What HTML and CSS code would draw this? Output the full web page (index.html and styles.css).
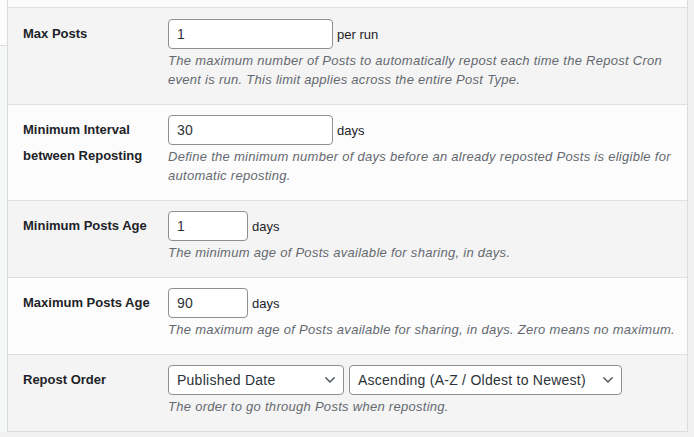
FILE: index.html
```html
<!DOCTYPE html>
<html lang="en">
<head>
<meta charset="utf-8">
<title>Repost Settings</title>
<link rel="stylesheet" href="styles.css">
</head>
<body>
<div class="page">
  <nav class="tabs">
    <div class="tab tab--active"></div>
    <div class="tab"></div>
  </nav>
  <div class="panel">
    <div class="strip"></div>

    <div class="row row--alt row--first">
      <div class="label">Max Posts</div>
      <div class="field">
        <div class="control">
          <input class="input input--wide" type="text" value="1">
          <span class="unit">per run</span>
        </div>
        <p class="desc">The maximum number of Posts to automatically repost each time the Repost Cron event is run. This limit applies across the entire Post Type.</p>
      </div>
    </div>

    <div class="row">
      <div class="label">Minimum Interval between Reposting</div>
      <div class="field">
        <div class="control">
          <input class="input input--wide" type="text" value="30">
          <span class="unit">days</span>
        </div>
        <p class="desc">Define the minimum number of days before an already reposted Posts is eligible for automatic reposting.</p>
      </div>
    </div>

    <div class="row row--alt">
      <div class="label">Minimum Posts Age</div>
      <div class="field">
        <div class="control">
          <input class="input input--small" type="text" value="1">
          <span class="unit">days</span>
        </div>
        <p class="desc">The minimum age of Posts available for sharing, in days.</p>
      </div>
    </div>

    <div class="row">
      <div class="label">Maximum Posts Age</div>
      <div class="field">
        <div class="control">
          <input class="input input--small" type="text" value="90">
          <span class="unit">days</span>
        </div>
        <p class="desc">The maximum age of Posts available for sharing, in days. Zero means no maximum.</p>
      </div>
    </div>

    <div class="row row--alt row--last">
      <div class="label">Repost Order</div>
      <div class="field">
        <div class="control control--selects">
          <span class="select-wrap select-wrap--first">
            <select class="select">
              <option>Published Date</option>
            </select>
            <svg class="chevron" width="10" height="6" viewBox="0 0 10 6" aria-hidden="true"><polyline points="0.8,0.8 5,5 9.2,0.8" fill="none" stroke="#50575e" stroke-width="1.5" stroke-linecap="round" stroke-linejoin="round"/></svg>
          </span>
          <span class="select-wrap select-wrap--second">
            <select class="select">
              <option>Ascending (A-Z / Oldest to Newest)</option>
            </select>
            <svg class="chevron" width="10" height="6" viewBox="0 0 10 6" aria-hidden="true"><polyline points="0.8,0.8 5,5 9.2,0.8" fill="none" stroke="#50575e" stroke-width="1.5" stroke-linecap="round" stroke-linejoin="round"/></svg>
          </span>
        </div>
        <p class="desc">The order to go through Posts when reposting.</p>
      </div>
    </div>
  </div>
</div>
</body>
</html>
```

FILE: styles.css
```css
* {
  box-sizing: border-box;
}

html, body {
  margin: 0;
  padding: 0;
}

body {
  background: #f0f0f1;
  font-family: "Liberation Sans", Arial, sans-serif;
  font-size: 13px;
  color: #1d2327;
  width: 694px;
  height: 437px;
  overflow: hidden;
}

.page {
  display: flex;
  align-items: stretch;
  padding-right: 6px;
}

.tabs {
  width: 7px;
  display: flex;
  flex-direction: column;
}

.tab {
  flex: 1;
  background: #f6f7f7;
  border-top: 1px solid #dcdcde;
}

.tab--active {
  flex: 0 0 45px;
  background: #fcfcfc;
  border-top: none;
}

.panel {
  flex: 1;
  border-left: 1px solid #dcdcde;
  border-right: 1px solid #dcdcde;
  border-bottom: 1px solid #dcdcde;
  background: #fcfcfc;
}

.strip {
  height: 7px;
  background: #fcfcfc;
}

.row {
  display: grid;
  grid-template-columns: 160px 1fr;
  padding: 10px 0 15px;
  border-top: 1px solid #e0e0e0;
  background: #fcfcfc;
}

.row--alt {
  background: #f4f4f4;
}

.row--first {
  padding-top: 11px;
}

.label {
  padding: 2px 10px 0 15px;
  font-weight: 700;
  font-size: 13px;
  line-height: 26px;
  color: #1d2327;
}

.field {
  padding-right: 4px;
  min-width: 0;
}

.control {
  display: flex;
  align-items: center;
  gap: 4px;
  height: 30px;
}

.control--selects {
  gap: 5px;
}

.input {
  height: 30px;
  border: 1px solid #8c8f94;
  border-radius: 4px;
  background: #fff;
  padding: 0 8px;
  font-family: "Liberation Sans", Arial, sans-serif;
  font-size: 14px;
  letter-spacing: 0.3px;
  color: #2c3338;
  outline: none;
}

.input--wide {
  width: 165px;
}

.input--small {
  width: 80px;
}

.unit {
  font-size: 13px;
  color: #1d2327;
}

.select-wrap {
  position: relative;
  display: block;
  height: 30px;
}

.select-wrap--first {
  width: 176px;
}

.select-wrap--second {
  width: 273px;
}

.select {
  appearance: none;
  -webkit-appearance: none;
  width: 100%;
  height: 30px;
  border: 1px solid #8c8f94;
  border-radius: 4px;
  background: #fff;
  padding: 0 24px 0 8px;
  font-family: "Liberation Sans", Arial, sans-serif;
  font-size: 14px;
  letter-spacing: 0.25px;
  color: #2c3338;
  outline: none;
}

.chevron {
  position: absolute;
  right: 9px;
  top: 12px;
  pointer-events: none;
}

.desc {
  margin: 2px 0 0;
  font-style: italic;
  font-size: 13px;
  line-height: 19px;
  letter-spacing: 0.28px;
  color: #646970;
}
```
